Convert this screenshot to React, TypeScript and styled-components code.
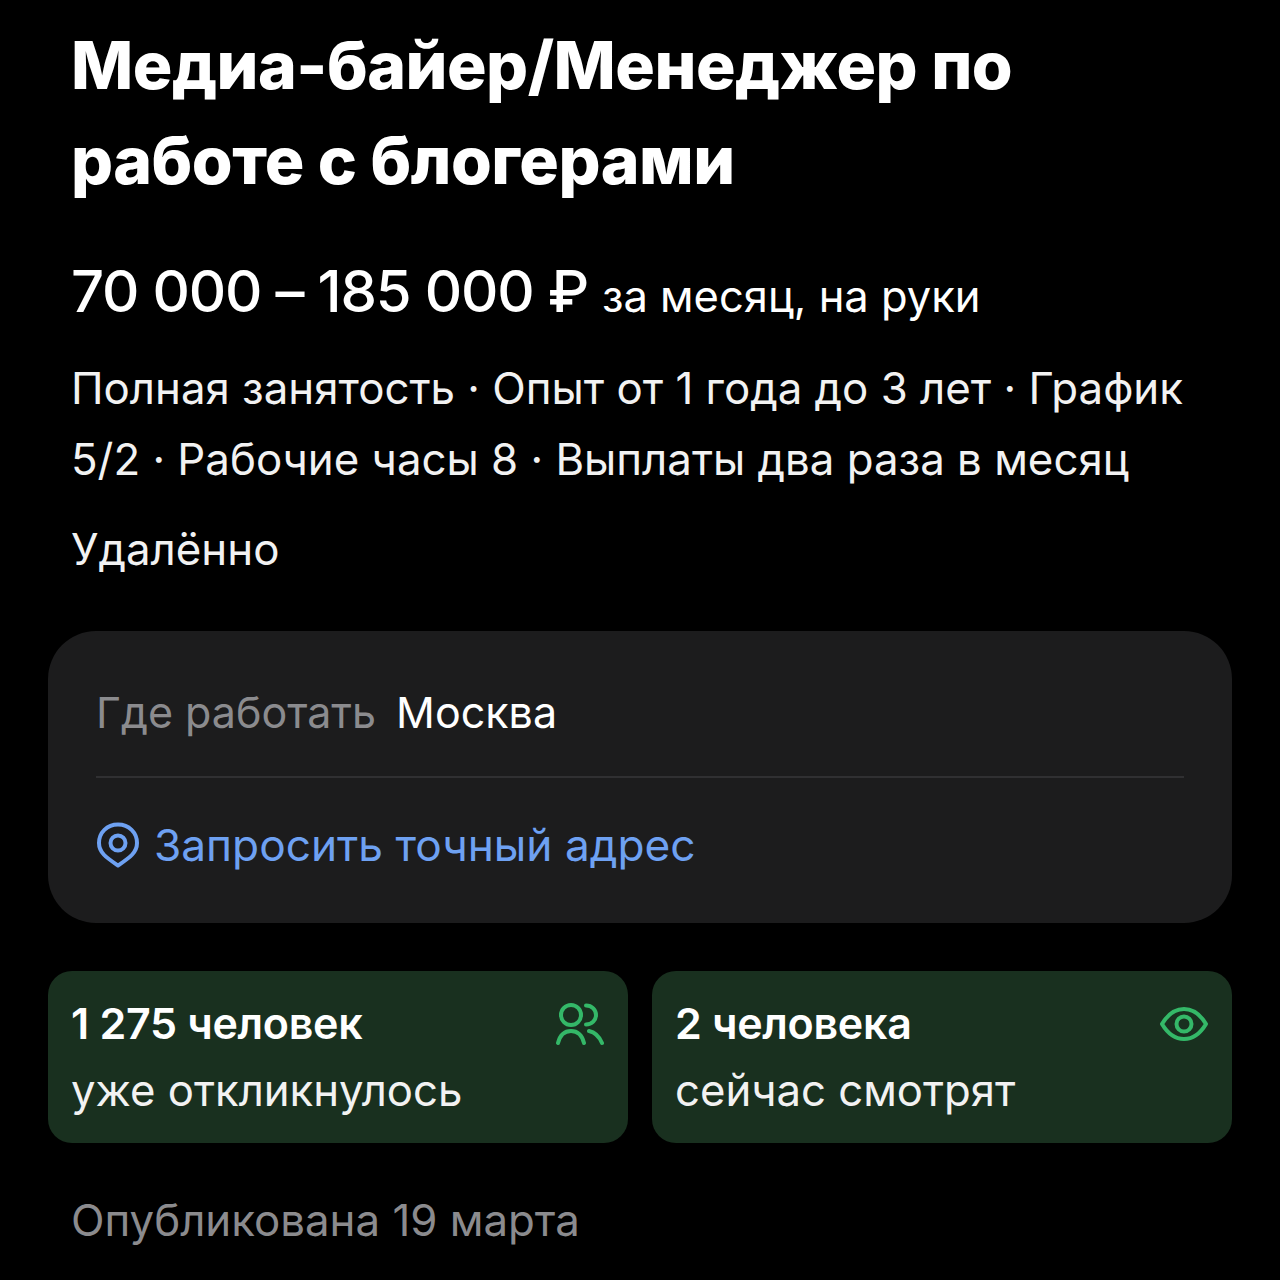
import React from 'react';
import styled, { createGlobalStyle } from 'styled-components';

const GlobalStyle = createGlobalStyle`
  html, body {
    margin: 0;
    padding: 0;
    background: #000;
  }
`;

const Page = styled.div`
  width: 1280px;
  height: 1280px;
  overflow: hidden;
  box-sizing: border-box;
  background: #000;
  color: #fff;
  font-family: Inter, "Noto Sans", sans-serif;
  padding: 18px 48px 0;
`;

const Intro = styled.div`
  padding: 0 23px;
`;

const Title = styled.h1`
  margin: 0;
  font-size: 66px;
  line-height: 95px;
  font-weight: 800;
  letter-spacing: -0.5px;
`;

const SalaryRow = styled.div`
  display: flex;
  align-items: baseline;
  margin-top: 48px;
  height: 70px;
`;

const Salary = styled.span`
  font-size: 58px;
  line-height: 70px;
  font-weight: 500;
  letter-spacing: -1.2px;
`;

const SalaryNote = styled.span`
  font-size: 43.5px;
  margin-left: 14px;
`;

const Details = styled.p`
  margin: 27px 0 0;
  font-size: 43.8px;
  line-height: 71px;
  color: #f2f2f2;
`;

const Format = styled(Details)`
  margin-top: 19px;
`;

const AddressCard = styled.section`
  margin-top: 46px;
  height: 292px;
  box-sizing: border-box;
  padding: 0 48px;
  border-radius: 48px;
  background: #1c1c1d;
`;

const CityRow = styled.div`
  height: 147px;
  padding-top: 16px;
  display: flex;
  align-items: center;
  font-size: 43px;
  border-bottom: 2px solid #303032;
  box-sizing: border-box;
`;

const CityLabel = styled.span`
  color: #8b8b8e;
  margin-right: 20px;
`;

const AddressLink = styled.div`
  height: 143px;
  padding-bottom: 10px;
  box-sizing: border-box;
  display: flex;
  align-items: center;
  gap: 14px;
  color: #6ea1f2;
  font-size: 44.2px;
`;

const Stats = styled.div`
  display: grid;
  grid-template-columns: 580px 580px;
  gap: 24px;
  margin-top: 48px;
`;

const StatCard = styled.div`
  height: 172px;
  box-sizing: border-box;
  padding: 19px 24px 0 23px;
  border-radius: 24px;
  background: #19301f;
  display: flex;
  justify-content: space-between;
`;

const StatCount = styled.div`
  font-size: 43px;
  line-height: 67px;
  font-weight: 600;
  letter-spacing: -0.3px;
`;

const StatLabel = styled.div`
  font-size: 43.7px;
  line-height: 67px;
  color: #f2f2f2;
`;

const StatIcon = styled.span<{ $top: number }>`
  margin-top: ${(p) => p.$top}px;
  height: fit-content;
  display: flex;
`;

const Published = styled.div`
  margin: 43px 0 0 23px;
  font-size: 43.8px;
  line-height: 70px;
  color: #8b8b8e;
`;

const PinIcon = () => (
  <svg width="44" height="46" viewBox="0 0 44 46" fill="none" stroke="#6ea1f2" strokeWidth="4" strokeLinejoin="round">
    <path d="M22 2.500C11 2.500 3 10.500 3 21c0 10 8 15 19 22.500C33 36 41 31 41 21 41 10.500 33 2.500 22 2.500Z" />
    <circle cx="22" cy="21" r="7.500" />
  </svg>
);

const PeopleIcon = () => (
  <svg width="48" height="44" viewBox="0 0 48 44" fill="none" stroke="#34b868" strokeWidth="4" strokeLinecap="round">
    <circle cx="15" cy="13" r="10" />
    <path d="M2 41c2-8 7-12 13-12s11 4 13 12" />
    <path d="M30 3.500c6 0 10 4.500 10 9.500s-4 9.500-10 9.500" />
    <path d="M33 29c5 1 10 5 13 12" />
  </svg>
);

const EyeIcon = () => (
  <svg width="48" height="34" viewBox="0 0 48 34" fill="none" stroke="#34b868" strokeWidth="4" strokeLinejoin="round">
    <path d="M2 17C8 7 15 2 24 2s16 5 22 15c-6 10-13 15-22 15S8 27 2 17Z" />
    <circle cx="24" cy="17" r="7.500" />
  </svg>
);

export default function App() {
  return (
    <Page>
      <GlobalStyle />
      <Intro>
        <Title>Медиа-байер/Менеджер по работе с блогерами</Title>
        <SalaryRow>
          <Salary>70 000 – 185 000 ₽</Salary>
          <SalaryNote>за месяц, на руки</SalaryNote>
        </SalaryRow>
        <Details>Полная занятость · Опыт от 1 года до 3 лет · График 5/2 · Рабочие часы 8 · Выплаты два раза в месяц</Details>
        <Format>Удалённо</Format>
      </Intro>
      <AddressCard>
        <CityRow>
          <CityLabel>Где работать</CityLabel>
          Москва
        </CityRow>
        <AddressLink>
          <PinIcon />
          Запросить точный адрес
        </AddressLink>
      </AddressCard>
      <Stats>
        <StatCard>
          <div>
            <StatCount>1 275 человек</StatCount>
            <StatLabel>уже откликнулось</StatLabel>
          </div>
          <StatIcon $top={12}>
            <PeopleIcon />
          </StatIcon>
        </StatCard>
        <StatCard>
          <div>
            <StatCount>2 человека</StatCount>
            <StatLabel>сейчас смотрят</StatLabel>
          </div>
          <StatIcon $top={17}>
            <EyeIcon />
          </StatIcon>
        </StatCard>
      </Stats>
      <Published>Опубликована 19 марта</Published>
    </Page>
  );
}
